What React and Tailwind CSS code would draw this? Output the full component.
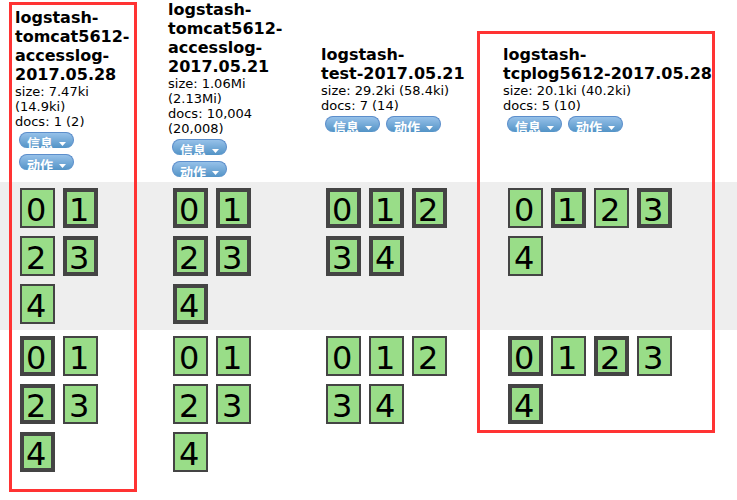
const indices = [
  {
    name: ['logstash-', 'tomcat5612-', 'accesslog-', '2017.05.28'],
    stats: ['size: 7.47ki', '(14.9ki)', 'docs: 1 (2)'],
    primaries: [[1, 3], [0, 2, 4]],
  },
  {
    name: ['logstash-', 'tomcat5612-', 'accesslog-', '2017.05.21'],
    stats: ['size: 1.06Mi', '(2.13Mi)', 'docs: 10,004', '(20,008)'],
    primaries: [[0, 1, 2, 3, 4], []],
  },
  {
    name: ['logstash-', 'test-2017.05.21'],
    stats: ['size: 29.2ki (58.4ki)', 'docs: 7 (14)'],
    primaries: [[0, 1, 2, 3, 4], []],
  },
  {
    name: ['logstash-', 'tcplog5612-2017.05.28'],
    stats: ['size: 20.1ki (40.2ki)', 'docs: 5 (10)'],
    primaries: [[1, 3], [0, 2, 4]],
  },
];

const shards = [0, 1, 2, 3, 4];

function MenuButton({ children }) {
  return (
    <button
      type="button"
      className="flex h-4 w-[55px] items-start gap-[6px] overflow-hidden rounded-lg border border-b-0 border-[#5c8ecb] bg-linear-to-b from-[#96c1e9] to-[#5293c6] pl-[7px] pt-[3px] text-[13px] leading-4 font-bold text-white"
    >
      <span>{children}</span>
      <svg className="mt-[6px] shrink-0" width="7" height="4" viewBox="0 0 7 4" aria-hidden="true">
        <path d="M0 0h7L3.5 4z" fill="currentColor" />
      </svg>
    </button>
  );
}

function Shard({ id, primary }) {
  return (
    <button
      type="button"
      className={
        'h-10 w-[35px] border-[#444] bg-[#9d8] text-left text-[32px] ' +
        (primary ? 'border-4 pl-[2px] leading-9' : 'border-2 pl-1 leading-10')
      }
    >
      {id}
    </button>
  );
}

function IndexHeader({ index }) {
  return (
    <th scope="col" className="pr-[25px] pb-[2px] pl-[15px] text-left align-middle font-normal whitespace-nowrap">
      <div className="text-base leading-[19px] font-bold">
        {index.name.map((line) => (
          <div key={line}>{line}</div>
        ))}
      </div>
      <div className="text-[13px] leading-[15px]">
        {index.stats.map((line) => (
          <div key={line}>{line}</div>
        ))}
      </div>
      <div className="flex flex-wrap gap-[6px] py-[3px] pl-1">
        <MenuButton>信息</MenuButton>
        <MenuButton>动作</MenuButton>
      </div>
    </th>
  );
}

export default function App() {
  return (
    <main className="relative min-h-screen bg-white font-['DejaVu_Sans','Noto_Sans_CJK_SC',sans-serif] text-black">
      <table className="w-full table-fixed border-collapse">
        <colgroup>
          <col className="w-[153px]" />
          <col className="w-[153px]" />
          <col className="w-[182px]" />
          <col />
        </colgroup>
        <thead>
          <tr>
            {indices.map((index) => (
              <IndexHeader key={index.name.join('')} index={index} />
            ))}
          </tr>
        </thead>
        <tbody>
          {[0, 1].map((node) => (
            <tr key={node} className="odd:bg-[#eee]">
              {indices.map((index) => (
                <td key={index.name.join('')} className="py-[6px] pr-[25px] pl-5 align-top">
                  <div className="flex max-w-[200px] flex-wrap gap-2">
                    {shards.map((id) => (
                      <Shard key={id} id={id} primary={index.primaries[node].includes(id)} />
                    ))}
                  </div>
                </td>
              ))}
            </tr>
          ))}
        </tbody>
      </table>
      <div className="pointer-events-none absolute top-[2px] left-[9px] h-[490px] w-32 border-3 border-[#f33]" />
      <div className="pointer-events-none absolute top-[31px] left-[477px] h-[402px] w-[238px] border-3 border-[#f33]" />
    </main>
  );
}
